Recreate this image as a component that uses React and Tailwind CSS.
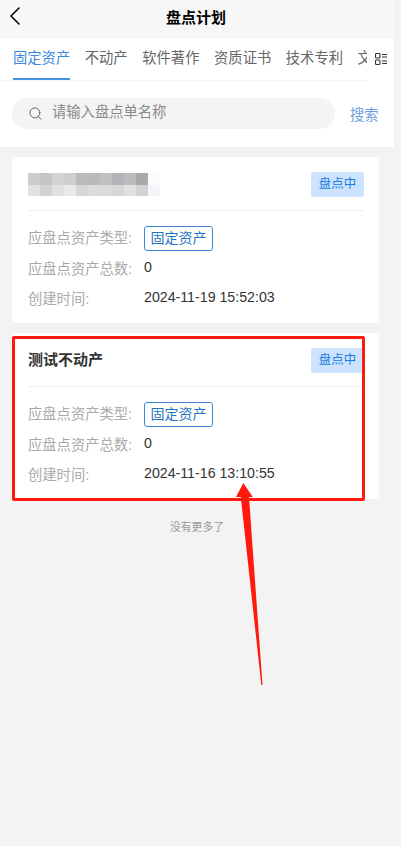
import React from "react";
import { ChevronLeft, Search } from "lucide-react";

const tabs = ["固定资产", "不动产", "软件著作", "资质证书", "技术专利", "文档资料"];

const mosaicCells = [
  "bg-[#cdcdcd]", "bg-[#c6c5c4]", "bg-[#d3d3d3]", "bg-[#cfcfcf]", "bg-[#b9bcbc]", "bg-[#bababa]",
  "bg-[#c0c0c0]", "bg-[#b3b5b8]", "bg-[#bcbcbc]", "bg-[#a9a9a9]", "bg-[#fbfbfb]",
  "bg-[#e2e2e2]", "bg-[#d3d3d1]", "bg-[#e0e2e1]", "bg-[#e9e9e9]", "bg-[#d5d8d8]", "bg-[#dcdcda]",
  "bg-[#dadcdc]", "bg-[#d8d5d5]", "bg-[#e0e0e0]", "bg-[#d3d3d3]", "bg-[#f4f5f8]",
];

const Mosaic = () => (
  <div className="grid grid-cols-[repeat(11,12px)] grid-rows-[12px_11px]">
    {mosaicCells.map((cell, i) => (
      <div key={i} className={cell} />
    ))}
  </div>
);

const PlanCard = ({ title, time }) => (
  <div className="bg-white rounded-[5px] pl-4 pr-[15px] pt-[15px] h-[166px]">
    <div className="flex items-center justify-between h-[24px]">
      {title ? (
        <span className="text-[15px] font-bold text-[#333]">{title}</span>
      ) : (
        <Mosaic />
      )}
      <span className="w-[53px] h-[25px] flex items-center justify-center rounded-[3px] bg-[#cce4ff] text-[12.5px] text-[#1a7de0]">
        盘点中
      </span>
    </div>
    <div className="h-px bg-[#eeeeee] mt-[14px]" />
    <div className="mt-[15px] flex items-center h-[25px]">
      <span className="w-[116px] text-[14.3px] text-[#aaa]">应盘点资产类型:</span>
      <span className="w-[69px] h-[25px] flex items-center justify-center rounded-[3px] border border-[#3b87d6] text-[14px] text-[#1f74c4]">
        固定资产
      </span>
    </div>
    <div className="mt-[6px] flex items-start h-[24px]">
      <span className="w-[116px] text-[14.3px] leading-[24px] text-[#aaa]">应盘点资产总数:</span>
      <span className="text-[14.2px] leading-[20px] text-[#333]">0</span>
    </div>
    <div className="mt-[6px] flex items-start h-[24px]">
      <span className="w-[116px] text-[14.3px] leading-[24px] text-[#aaa]">创建时间:</span>
      <span className="text-[14.2px] leading-[20px] text-[#333]">{time}</span>
    </div>
  </div>
);

export default function App() {
  return (
    <div className="relative h-[846px] overflow-hidden bg-[#f3f3f3] font-['Liberation_Sans','Noto_Sans_CJK_SC',sans-serif]">
      <div className="w-[394px]">
        {/* Header */}
        <div className="relative h-[39px] bg-[#f7f7f7] flex items-center justify-center pb-[2px] pr-[2px]">
          <ChevronLeft size={32} strokeWidth={1.2} className="absolute left-[-1px] top-0 text-black" />
          <span className="text-[15px] font-bold text-black">盘点计划</span>
        </div>

        {/* Tabs */}
        <div className="h-[42px] bg-white flex">
          <div className="w-[367px] h-[42px] pl-[13px] flex gap-[14.6px] overflow-hidden border-b border-[#f6f6f6]">
            {tabs.map((tab, i) => (
              <div
                key={tab}
                className={`shrink-0 h-[41px] pt-[1px] flex items-center text-[14.3px] border-b-2 ${
                  i === 0
                    ? "text-[#3c8ae0] border-[#4a90e2]"
                    : "text-[#666] border-transparent"
                }`}
              >
                {tab}
              </div>
            ))}
          </div>
          <svg width="12" height="12" viewBox="0 0 12 12" fill="none" stroke="#333" strokeWidth="1.1" className="ml-[8px] mt-[14px]">
            <rect x="0.5" y="0.5" width="4.5" height="4.5" rx="1" />
            <rect x="0.5" y="7" width="4.5" height="4.5" rx="1" />
            <path d="M7 1.5h5M7 4h5M7 8h5M7 10.5h5" />
          </svg>
        </div>

        {/* Search */}
        <div className="h-[66px] bg-white flex items-start pl-3 pt-[17px]">
          <div className="w-[323px] h-[31px] rounded-full bg-[#f4f4f4] flex items-center pl-[16px]">
            <Search size={15} strokeWidth={1.4} className="text-[#555]" />
            <span className="ml-[9px] mb-[2px] text-[14.3px] text-[#8a8a8a]">请输入盘点单名称</span>
          </div>
          <span className="ml-[15px] mt-[7px] text-[14.3px] text-[#6a9fdc]">搜索</span>
        </div>

        {/* List */}
        <div className="px-3 pt-[10px] pr-[15px] flex flex-col gap-[10px]">
          <PlanCard time="2024-11-19 15:52:03" />
          <PlanCard title="测试不动产" time="2024-11-16 13:10:55" />
        </div>
        <div className="mt-[20px] text-center text-[10.8px] text-[#999]">没有更多了</div>
      </div>

      {/* Red annotation */}
      <div className="absolute left-[12px] top-[336px] w-[353px] h-[165px] border-[3px] border-[#ff1a0d] rounded-[2px]" />
      <svg width="401" height="846" className="absolute left-0 top-0 pointer-events-none">
        <polygon
          points="243.3,483 236,497 240.8,497 261.3,685 262.5,685 249,497 252.8,497"
          fill="#ff1a0d"
        />
      </svg>
    </div>
  );
}
